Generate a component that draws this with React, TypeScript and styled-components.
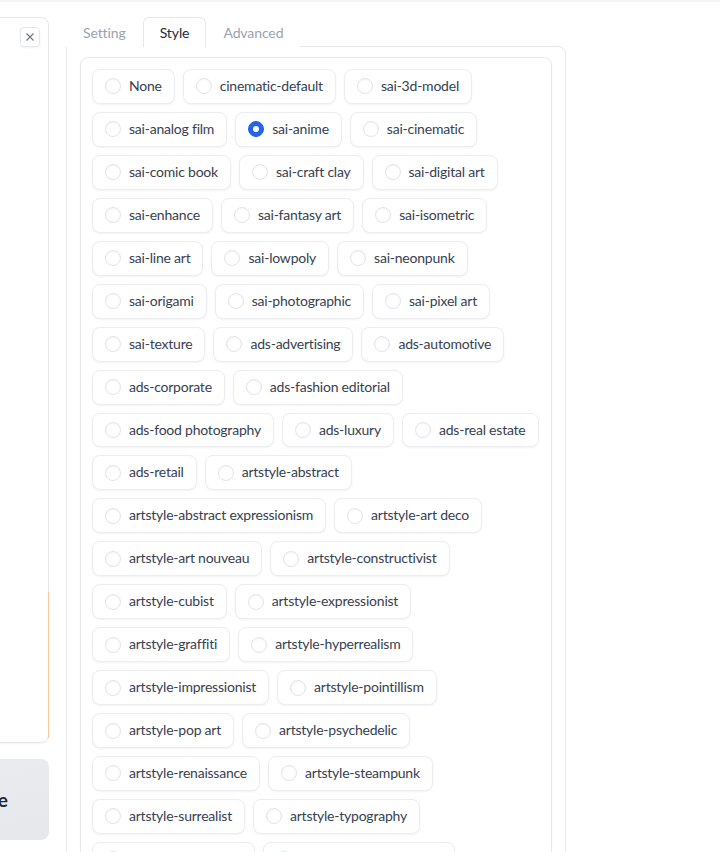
import React from 'react';
import styled, {createGlobalStyle} from "styled-components";

const GlobalStyle = createGlobalStyle`
  html, body {
    margin: 0;
    padding: 0;
    background: #fff;
    overflow: hidden;
  }
  body {
    font-family: Lato, "Noto Sans", sans-serif;
    font-variant-ligatures: none;
    color: #1f2937;
  }
  * {
    box-sizing: border-box;
  }
`

const styles = [
    'None', 'cinematic-default', 'sai-3d-model', 'sai-analog film', 'sai-anime', 'sai-cinematic',
    'sai-comic book', 'sai-craft clay', 'sai-digital art', 'sai-enhance', 'sai-fantasy art', 'sai-isometric',
    'sai-line art', 'sai-lowpoly', 'sai-neonpunk', 'sai-origami', 'sai-photographic', 'sai-pixel art',
    'sai-texture', 'ads-advertising', 'ads-automotive', 'ads-corporate', 'ads-fashion editorial',
    'ads-food photography', 'ads-luxury', 'ads-real estate', 'ads-retail', 'artstyle-abstract',
    'artstyle-abstract expressionism', 'artstyle-art deco', 'artstyle-art nouveau', 'artstyle-constructivist',
    'artstyle-cubist', 'artstyle-expressionist', 'artstyle-graffiti', 'artstyle-hyperrealism',
    'artstyle-impressionist', 'artstyle-pointillism', 'artstyle-pop art', 'artstyle-psychedelic',
    'artstyle-renaissance', 'artstyle-steampunk', 'artstyle-surrealist', 'artstyle-typography',
    'artstyle-watercolor', 'futuristic-biomechanical',
];

const tabs = ['Setting', 'Style', 'Advanced'];

export default function App() {
    return (
        <>
            <GlobalStyle/>
            <StyledTopLine/>
            <StyledPage>
                <StyledLeftColumn>
                    <StyledOutputPanel>
                        <StyledPanelHeader>
                            <StyledCloseBtn aria-label="close">
                                <svg width="8" height="8" viewBox="0 0 8 8">
                                    <path d="M0.5 0.5 L7.5 7.5 M7.5 0.5 L0.5 7.5" stroke="#6b7280" strokeWidth="1.1"/>
                                </svg>
                            </StyledCloseBtn>
                        </StyledPanelHeader>
                        <StyledPendingEdge/>
                    </StyledOutputPanel>
                    <StyledGenerateBtn>Generate</StyledGenerateBtn>
                </StyledLeftColumn>
                <StyledRightColumn>
                    <StyledTabNav>
                        {tabs.map(t => (
                            <StyledTab key={t} $selected={t === 'Style'}>{t}</StyledTab>
                        ))}
                    </StyledTabNav>
                    <StyledTabPanel>
                        <StyledBlock>
                            {styles.map(s => (
                                <StyledRadioLabel key={s}>
                                    <StyledRadioCircle $checked={s === 'sai-anime'}/>
                                    <StyledRadioText>{s}</StyledRadioText>
                                </StyledRadioLabel>
                            ))}
                        </StyledBlock>
                    </StyledTabPanel>
                </StyledRightColumn>
            </StyledPage>
        </>
    );
}

const StyledTopLine = styled.div`
  height: 2px;
  background-color: #f3f4f6;
`
const StyledPage = styled.main`
  display: flex;
  align-items: flex-start;
  gap: 17px;
  padding-top: 15px;
`
const StyledLeftColumn = styled.div`
  width: 300px;
  margin-left: -251px;
  display: flex;
  flex-direction: column;
  gap: 16px;
  flex-shrink: 0;
`
const StyledOutputPanel = styled.section`
  height: 726px;
  border: 1px solid #e5e7eb;
  border-radius: 8px;
  display: flex;
  flex-direction: column;
  box-shadow: 0 1px 2px rgba(0, 0, 0, 0.04);
`
const StyledPanelHeader = styled.div`
  display: flex;
  justify-content: flex-end;
  padding: 9px 8px 0 0;
`
const StyledCloseBtn = styled.button`
  width: 20px;
  height: 20px;
  display: flex;
  align-items: center;
  justify-content: center;
  padding: 0;
  background: #fff;
  border: 1px solid #e5e7eb;
  border-radius: 4px;
  box-shadow: 0 1px 2px rgba(0, 0, 0, 0.05);
`
const StyledPendingEdge = styled.div`
  margin: auto -1px 4px 0;
  height: 146px;
  border-right: 1.5px solid #f8c9a0;
`
const StyledGenerateBtn = styled.button`
  height: 81px;
  border: none;
  border-radius: 8px;
  background: linear-gradient(to bottom right, #eceef1, #e5e7eb);
  font-family: Lato, "Noto Sans", sans-serif;
  font-size: 19px;
  font-weight: 700;
  color: #1f2937;
  text-align: right;
  padding: 0 41px 0 0;
`
const StyledRightColumn = styled.div`
  width: 500px;
  flex-shrink: 0;
  display: flex;
  flex-direction: column;
`
const StyledTabNav = styled.nav`
  display: flex;
  height: 30px;
  margin-bottom: -1px;
`
interface TabProps {
    $selected: boolean
}
const StyledTab = styled.button<TabProps>`
  position: relative;
  z-index: 1;
  height: 30px;
  padding: 0 16px;
  font-family: Lato, "Noto Sans", sans-serif;
  font-size: 14px;
  letter-spacing: -0.1px;
  color: ${props => props.$selected ? '#1f2937' : '#9ca3af'};
  background: #fff;
  border: 1px solid ${props => props.$selected ? '#e5e7eb' : 'transparent'};
  border-bottom: none;
  border-radius: 6px 6px 0 0;
`
const StyledTabPanel = styled.div`
  border: 1px solid #e5e7eb;
  border-radius: 0 8px 0 0;
  padding: 10px 13px;
  min-height: 900px;
`
const StyledBlock = styled.div`
  border: 1px solid #e5e7eb;
  border-radius: 8px;
  padding: 11px;
  display: flex;
  flex-wrap: wrap;
  gap: 8px;
  box-shadow: 0 1px 2px rgba(0, 0, 0, 0.03);
`
const StyledRadioLabel = styled.label`
  display: flex;
  align-items: center;
  gap: 8px;
  padding: 8px 12px;
  border: 1px solid #ebedf0;
  border-radius: 8px;
  background: #fff;
  box-shadow: 0 1px 2px rgba(0, 0, 0, 0.05);
  cursor: pointer;
`
interface RadioCircleProps {
    $checked: boolean
}
const StyledRadioCircle = styled.span<RadioCircleProps>`
  width: 16px;
  height: 16px;
  border-radius: 50%;
  flex-shrink: 0;
  display: flex;
  align-items: center;
  justify-content: center;
  background: ${props => props.$checked ? '#2563eb' : '#fff'};
  border: 1px solid ${props => props.$checked ? '#2563eb' : '#e2e4e8'};
  box-shadow: ${props => props.$checked ? 'none' : 'inset 0 1px 2px rgba(0, 0, 0, 0.04)'};

  &::after {
    content: "";
    width: 6px;
    height: 6px;
    border-radius: 50%;
    background: #fff;
    display: ${props => props.$checked ? 'block' : 'none'};
  }
`
const StyledRadioText = styled.span`
  font-size: 14px;
  line-height: 16.94px;
  letter-spacing: -0.22px;
  color: #374151;
  white-space: nowrap;
`
